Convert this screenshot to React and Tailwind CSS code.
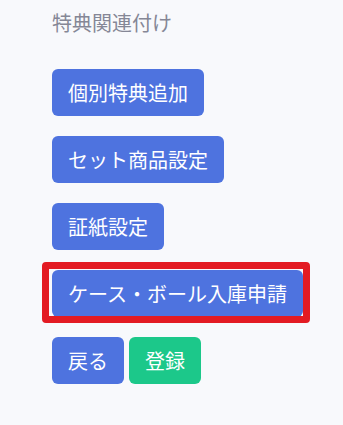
const Btn = ({ children, color = "bg-[#4e73df]" }) => (
  <button
    className={
      color +
      " rounded-md px-4 py-3 text-[20px] leading-[23px] text-white whitespace-nowrap"
    }
  >
    {children}
  </button>
);

export default function App() {
  return (
    <div
      className="min-h-[425px] w-[343px] bg-[#f8f9fc] pl-[52px] pt-2"
      style={{ fontFamily: '"Noto Sans CJK JP", "Noto Sans", sans-serif' }}
    >
      <h2 className="text-[20px] leading-[30px] text-[#858796]">特典関連付け</h2>
      <div className="mt-[31px] flex flex-col items-start gap-5">
        <Btn>個別特典追加</Btn>
        <Btn>セット商品設定</Btn>
        <Btn>証紙設定</Btn>
        <div className="relative">
          <Btn>ケース・ボール入庫申請</Btn>
          {/* hand-drawn highlight frame */}
          <span className="pointer-events-none absolute -top-[8px] -bottom-[6px] -left-[10px] -right-[7px] rounded-[4px] border-[7px] border-[#e31b23]" />
        </div>
        <div className="flex gap-[5px]">
          <Btn>戻る</Btn>
          <Btn color="bg-[#1cc88a]">登録</Btn>
        </div>
      </div>
    </div>
  );
}
